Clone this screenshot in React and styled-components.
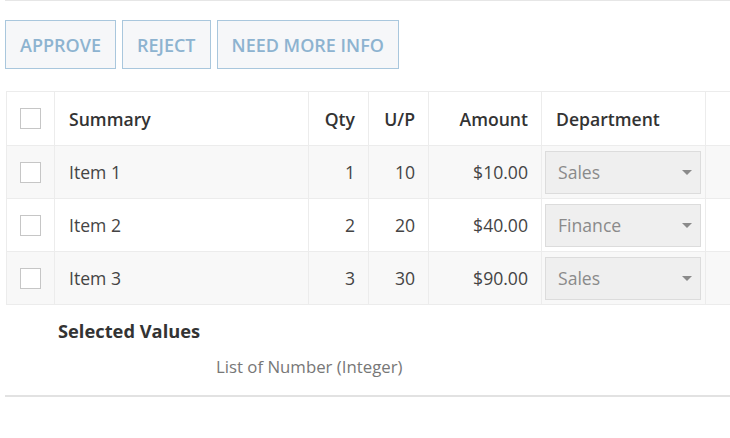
import React from "react";
import styled, { createGlobalStyle } from "styled-components";

const Global = createGlobalStyle`
  html, body {
    margin: 0;
    padding: 0;
    background: #ffffff;
    overflow: hidden;
  }
  body {
    font-family: "Open Sans", "Noto Sans", sans-serif;
    color: #333;
  }
`;

const Page = styled.div`
  width: 730px;
  padding-left: 5px;
  box-sizing: border-box;
  overflow: hidden;
`;

const Section = styled.div`
  border-top: 1px solid #e6e6e6;
  border-bottom: 2px solid #e2e2e2;
  padding-bottom: 17px;
`;

const Toolbar = styled.div`
  display: flex;
  gap: 6px;
  margin-top: 19px;
`;

const ActionButton = styled.button`
  height: 49px;
  padding: 0 14px;
  border: 1px solid #a9c7dd;
  background: #f6f7f9;
  color: #8db3d0;
  font-family: "Open Sans", sans-serif;
  font-weight: 600;
  font-size: 18px;
  text-transform: uppercase;
  cursor: pointer;
`;

const Table = styled.table`
  margin-top: 22px;
  margin-left: 1px;
  width: 760px;
  border-collapse: collapse;
  table-layout: fixed;
`;

const Row = styled.tr`
  background: ${(p) => (p.$striped ? "#f8f8f8" : "#ffffff")};
`;

const HeadCell = styled.th`
  height: 53px;
  padding: 0 13px 0 14px;
  border: 1px solid #ececec;
  font-size: 17.6px;
  font-weight: 600;
  color: #333;
  text-align: ${(p) => (p.$right ? "right" : "left")};
  white-space: nowrap;
`;

const Cell = styled.td`
  height: 52px;
  padding: ${(p) => (p.$tight ? "0 4px 0 3px" : "0 13px 0 14px")};
  border: 1px solid #ececec;
  font-size: 17.6px;
  color: #444;
  text-align: ${(p) => (p.$right ? "right" : "left")};
  white-space: nowrap;
`;

const CheckCell = styled.td`
  height: 52px;
  padding: 0;
  border: 1px solid #ececec;
  text-align: center;
`;

const CheckHead = styled(CheckCell).attrs({ as: "th" })`
  height: 53px;
`;

const Box = styled.span`
  display: inline-block;
  width: 19px;
  height: 19px;
  border: 1px solid #c6c6c6;
  background: #fff;
  vertical-align: middle;
  margin-top: -3px;
`;

const Select = styled.div`
  display: flex;
  align-items: center;
  justify-content: space-between;
  height: 41px;
  padding: 0 8px 0 12px;
  border: 1px solid #dcdcdc;
  background: #efefef;
  color: #8a8a8a;
  font-size: 17.6px;
`;

const Caret = styled.span`
  width: 0;
  height: 0;
  border-left: 5px solid transparent;
  border-right: 5px solid transparent;
  border-top: 5px solid #8a8a8a;
`;

const Field = styled.div`
  padding: 13px 0 0 53px;
`;

const FieldLabel = styled.div`
  font-size: 18.3px;
  font-weight: 700;
  color: #333;
`;

const FieldHint = styled.div`
  margin-top: 12px;
  padding-left: 158px;
  font-size: 16.8px;
  color: #777;
`;

const items = [
  { name: "Item 1", qty: 1, price: 10, dept: "Sales" },
  { name: "Item 2", qty: 2, price: 20, dept: "Finance" },
  { name: "Item 3", qty: 3, price: 30, dept: "Sales" },
];

const widths = [48, 254, 60, 60, 113, 164, 60];

export default function App() {
  return (
    <Page>
      <Global />
      <Section>
        <Toolbar>
          <ActionButton>Approve</ActionButton>
          <ActionButton>Reject</ActionButton>
          <ActionButton>Need More Info</ActionButton>
        </Toolbar>
        <Table>
          <colgroup>
            {widths.map((w, i) => (
              <col key={i} style={{ width: w }} />
            ))}
          </colgroup>
          <thead>
            <Row>
              <CheckHead>
                <Box />
              </CheckHead>
              <HeadCell>Summary</HeadCell>
              <HeadCell $right>Qty</HeadCell>
              <HeadCell $right>U/P</HeadCell>
              <HeadCell $right>Amount</HeadCell>
              <HeadCell>Department</HeadCell>
              <HeadCell />
            </Row>
          </thead>
          <tbody>
            {items.map((it, i) => (
              <Row key={it.name} $striped={i % 2 === 0}>
                <CheckCell>
                  <Box />
                </CheckCell>
                <Cell>{it.name}</Cell>
                <Cell $right>{it.qty}</Cell>
                <Cell $right>{it.price}</Cell>
                <Cell $right>${(it.qty * it.price).toFixed(2)}</Cell>
                <Cell $tight>
                  <Select>
                    {it.dept}
                    <Caret />
                  </Select>
                </Cell>
                <Cell />
              </Row>
            ))}
          </tbody>
        </Table>
        <Field>
          <FieldLabel>Selected Values</FieldLabel>
          <FieldHint>List of Number (Integer)</FieldHint>
        </Field>
      </Section>
    </Page>
  );
}
